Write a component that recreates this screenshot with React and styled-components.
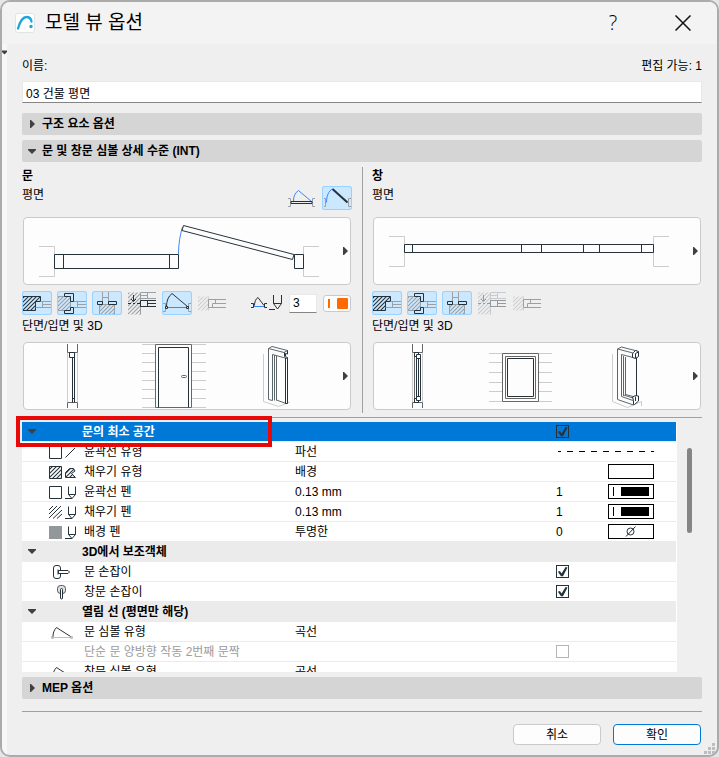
import React, { useState } from "react";
import styled, { createGlobalStyle } from "styled-components";

const INK = "#26323a";
const GRAY = "#9aa0a4";
const WALL = "#cccccc";
const BLUE = "#3a86ff";

const GlobalStyle = createGlobalStyle`
  * {
    box-sizing: border-box;
  }
  body {
    margin: 0;
    background: #e6e6e6;
    color: #000;
    font-family: "Liberation Sans", "Noto Sans CJK KR", sans-serif;
    font-size: 12px;
    line-height: 18px;
  }
  button, input {
    font: inherit;
    color: inherit;
    margin: 0;
    padding: 0;
  }
  svg {
    display: block;
    flex-shrink: 0;
  }
`;

const Dialog = styled.main`
  display: flex;
  flex-direction: column;
  height: 100vh;
  min-height: 640px;
  border: 2px solid #ababab;
  border-radius: 10px;
  background: #efefef;
  overflow: hidden;
`;

const TitleBar = styled.header`
  display: flex;
  align-items: center;
  flex-shrink: 0;
  height: 42px;
  padding: 0 19px 0 13px;
  background: #f3f3f3;
`;

const Title = styled.h1`
  flex: 1;
  margin: 0 0 0 10px;
  font-size: 19px;
  font-weight: 400;
  line-height: 28px;
`;

const TitleButton = styled.button`
  display: flex;
  align-items: center;
  justify-content: center;
  width: 30px;
  height: 30px;
  margin-left: 40px;
  border: 0;
  background: none;
  font-family: "Open Sans", sans-serif;
  font-size: 20px;
  font-weight: 300;
  line-height: 30px;
`;

const Main = styled.div`
  display: flex;
  flex: 1;
  min-height: 0;
`;

const SideStrip = styled.div`
  width: 5px;
  padding-top: 6px;
  background: #f7f7f7;
`;

const Body = styled.div`
  display: flex;
  flex-direction: column;
  flex: 1;
  min-width: 0;
  padding: 13px 15px 10px;
`;

const NameRow = styled.div`
  display: flex;
  justify-content: space-between;
`;

const NameInput = styled.input`
  width: 100%;
  height: 22px;
  margin: 6px 0 10px;
  padding: 0 3px;
  flex-shrink: 0;
  border: 1px solid #e8e8e8;
  border-bottom-color: #858585;
  background: #fff;
`;

const SectionButton = styled.button`
  display: flex;
  align-items: center;
  flex-shrink: 0;
  gap: 6px;
  width: 100%;
  height: 22px;
  margin-bottom: 5px;
  padding: 0 6px;
  border: 0;
  border-radius: 2px;
  background: #d5d5d5;
  font-weight: 700;
  text-align: left;
`;

const Panels = styled.div`
  display: grid;
  grid-template-columns: 1fr 1fr;
  flex-shrink: 0;
`;

const Panel = styled.section`
  padding: ${(p) => (p.$divided ? "0 0 3px 9px" : "0 10px 3px 0")};
  border-left: ${(p) => (p.$divided ? "1px solid #a0a0a0" : "0")};
`;

const PanelTitle = styled.h2`
  margin: 0;
  font-size: 12px;
  line-height: 19px;
`;

const ViewRow = styled.div`
  display: flex;
  gap: 5px;
  height: 24px;
`;

const ViewName = styled.span`
  flex: 1;
`;

const PreviewButton = styled.button`
  display: flex;
  align-items: center;
  width: calc(100% - 2px);
  height: 68px;
  margin: 7px 1px 0;
  border: 1px solid #cacaca;
  border-radius: 4px;
  background: #fdfdfd;
`;

const Drawing = styled.svg`
  flex: 1;
  min-width: 0;
  height: 66px;
`;

const ToolRow = styled.div`
  display: flex;
  align-items: center;
  gap: 5px;
  height: 24px;
  margin: 6px 0 2px;
`;

const ToolButton = styled.button`
  width: 30px;
  height: 24px;
  border: 0;
  border-radius: 3px;
  background: ${(p) => (p.$on ? "#cce8ff" : "transparent")};
  box-shadow: ${(p) => (p.$on ? "inset 0 0 0 1px #99d1ff" : "none")};
`;

const PenGroup = styled.div`
  display: flex;
  align-items: center;
  gap: 6px;
  margin: 0 1px 0 auto;
`;

const PenInput = styled.input`
  width: 28px;
  height: 19px;
  padding: 0 3px;
  border: 1px solid #e8e8e8;
  border-bottom-color: #858585;
  background: #fff;
`;

const ColorButton = styled.button`
  display: flex;
  align-items: center;
  justify-content: space-between;
  width: 28px;
  height: 17px;
  padding: 0 2px 0 4px;
  border: 1px solid #cacaca;
  border-radius: 3px;
  background: #fdfdfd;
`;

const PenStroke = styled.span`
  width: 2px;
  height: 9px;
  background: #ff6a00;
`;

const PenColor = styled.span`
  width: 11px;
  height: 11px;
  border-radius: 1px;
  background: #ff6a00;
`;

const Rule = styled.hr`
  flex-shrink: 0;
  width: 100%;
  height: 1px;
  margin: ${(p) => (p.$wide ? "7px 0 4px" : "4px 0")};
  border: 0;
  background: #a0a0a0;
`;

const OptionArea = styled.div`
  position: relative;
  display: flex;
  flex: 1;
  min-height: 0;
  margin-bottom: 5px;
`;

const OptionList = styled.div`
  flex: 1;
  padding-right: 1px;
  overflow: hidden;
  background: #fff;
`;

const ScrollThumb = styled.div`
  width: 5px;
  height: 34%;
  margin: 26px 10px 0;
  border-radius: 3px;
  background: #858585;
`;

const Marker = styled.div`
  position: absolute;
  top: -6px;
  left: -6px;
  width: 256px;
  height: 31px;
  border: 4px solid #e80808;
  pointer-events: none;
`;

const OptionTable = styled.table`
  width: 100%;
  border-spacing: 0;
  table-layout: fixed;
`;

const Column = styled.col`
  width: ${(p) => p.$width || "auto"};
`;

const Cell = styled.td`
  height: 20px;
  padding: 0 0 0 2px;
  border-bottom: 1px solid #ebebeb;
  line-height: 18px;
  text-align: left;
  vertical-align: middle;
  white-space: nowrap;
`;

const IconCell = styled(Cell)`
  padding-left: 26px;
`;

const ArrowCell = styled(Cell)`
  padding-left: 6px;
`;

const SwatchCell = styled(Cell)`
  padding-left: 0;
`;

const GroupCell = styled(Cell)`
  padding-left: 0;
`;

const OptionRow = styled.tr`
  color: ${(p) => (p.$disabled ? "#9b9b9b" : "inherit")};
`;

const GroupRow = styled.tr`
  background: ${(p) => (p.$selected ? "#0078d7" : "#ebebeb")};
  color: ${(p) => (p.$selected ? "#fff" : "#000")};
  font-weight: 700;
`;

const CheckBox = styled.input.attrs({ type: "checkbox" })`
  appearance: none;
  display: block;
  width: 13px;
  height: 13px;
  border: 1px solid ${INK};
  color: ${INK};

  &:checked::before {
    content: "";
    display: block;
    width: 11px;
    height: 11px;
    background: currentColor;
    clip-path: polygon(8% 52%, 26% 46%, 42% 68%, 78% 8%, 96% 14%, 54% 94%, 36% 94%);
  }
  &:disabled {
    border-color: #b5b5b5;
  }
`;

const Swatch = styled.button`
  display: flex;
  align-items: center;
  justify-content: center;
  gap: 7px;
  width: 46px;
  height: 15px;
  border: 1px solid #000;
  background: #fff;
`;

const SwatchLine = styled.span`
  width: 1px;
  height: 9px;
  background: #000;
`;

const SwatchFill = styled.span`
  width: 28px;
  height: 9px;
  background: #000;
`;

const Footer = styled.footer`
  display: flex;
  justify-content: flex-end;
  flex-shrink: 0;
  gap: 12px;
  padding: 8px 1px 0;
`;

const DialogButton = styled.button`
  width: 88px;
  height: 21px;
  border: 1px solid ${(p) => (p.$primary ? "#0078d7" : "#cacaca")};
  border-radius: 4px;
  background: #fdfdfd;
  line-height: 18px;
`;

const Grip = styled.svg`
  position: fixed;
  right: 4px;
  bottom: 2px;
`;

const Defs = styled.svg`
  position: absolute;
`;

const HatchDefs = () => (
  <Defs width="0" height="0" aria-hidden="true">
    <defs>
      {[["ink", INK], ["gray", GRAY], ["light", "#cfcfcf"]].map(([id, color]) => (
        <pattern
          key={id}
          id={`hatch-${id}`}
          width="4"
          height="4"
          patternUnits="userSpaceOnUse"
        >
          <path d="M-1 1 1 -1M0 4 4 0M3 5 5 3" stroke={color} strokeWidth="1.1" />
        </pattern>
      ))}
    </defs>
  </Defs>
);

const Arrow = ({ down, ...rest }) =>
  down ? (
    <svg width="8" height="5" fill="#404040" {...rest}>
      <path d="M0 0h8v1L4 5 0 1z" />
    </svg>
  ) : (
    <svg width="8" height="8" fill="#404040" {...rest}>
      <path d="M2 0h1l4 4-4 4H2z" />
    </svg>
  );

const Logo = () => (
  <svg width="20" height="20" viewBox="0 0 20 20" fill="none">
    <rect x=".5" y=".5" width="19" height="19" rx="2.5" fill="#fff" stroke="#dfe4e6" />
    <path
      d="M3 15.500C5 8.500 8 4 11.500 4c3 0 4.500 2 5 4.500"
      stroke="#1fa5d8"
      strokeWidth="2.300"
      strokeLinecap="round"
    />
    <circle cx="16" cy="13.500" r="1.700" fill="#1fa5d8" />
  </svg>
);

const Icon = ({ children, width = 30, height = 24 }) => (
  <svg width={width} height={height} viewBox={`0 0 ${width} ${height}`} fill="none" stroke={INK}>
    {children}
  </svg>
);

const toolIcons = {
  reveal: (
    <>
      <path d="M1 5.500H18.500V10.500H13.500V19.500H1" fill="url(#hatch-ink)" />
      <path d="M18.500 10.500H29M13.500 16.500H29M20.500 10.500V16.500M20.500 13.500H29" stroke={GRAY} />
    </>
  ),
  casing: (
    <>
      <path d="M1 5.500H13.500V19.500H1" stroke={GRAY} fill="url(#hatch-gray)" />
      <path d="M13.500 10.500H29M13.500 16.500H29M20.500 10.500V16.500M20.500 13.500H29" stroke={GRAY} />
      <path
        d="M7.500 5.500V2.500H16.500V10.500H13.500V5.500ZM7.500 19.500V22.500H16.500V16.500H13.500V19.500Z"
        fill="#cce8ff"
      />
    </>
  ),
  sill: (
    <>
      <path d="M10.500 1V13.500M16.500 1V13.500M10.500 6.500H16.500" stroke={GRAY} />
      <path d="M7.500 23V13.500H22.500V23" stroke={GRAY} fill="url(#hatch-gray)" />
      <path d="M5.500 10.500H10.500V13.500H5.500ZM16.500 10.500H24.500V13.500H16.500Z" />
    </>
  ),
  wallhole: (
    <>
      <path d="M13.500 1.500V23.500" stroke={GRAY} />
      <path d="M1 1.500H13.500V23.500H1Z" stroke="none" fill="url(#hatch-gray)" />
      <path d="M13.500 1.500H29M13.500 7.500H29M13.500 4.500H20.500M20.500 1.500V7.500" stroke={GRAY} />
      <path d="M13.500 9.500H29M13.500 15.500H29M20.500 12.500H29M20.500 9.500V15.500M13.500 9.500V15.500" />
      <path d="M6.500 4V10M4 8 6.500 10.500 9 8M1 12.500H4M6 12.500H8M10 12.500H13" />
    </>
  ),
  swing: (
    <>
      <path d="M1 12.500H3.500V20.500H1M29 12.500H26.500V20.500H29" stroke={GRAY} />
      <path d="M5 16.500H25" stroke={BLUE} />
      <path d="M4.500 15C4.500 10 6.500 5 10 2.500L25.500 15.500M3.500 15.500H5.500V17.500H3.500ZM24.500 15.500H26.500V17.500H24.500Z" />
    </>
  ),
  jamb: (
    <>
      <path d="M1 5.500H11.500V19.500H1Z" stroke="none" fill="url(#hatch-light)" />
      <path d="M11.500 5.500V19.500" stroke="#cfcfcf" />
      <path d="M29 8.500H11.500V16.500H29M29 12.500H15.500V16.500M18.500 8.500V12.500" stroke={GRAY} />
    </>
  ),
  closed: (
    <>
      <path d="M1 12.500H3.500V20.500H1M28 12.500H25.500V20.500H28" stroke={GRAY} />
      <path d="M6.500 15C6.500 10 8 7 11.500 4.500L24.500 15.500" stroke={BLUE} />
      <path d="M4 15.500H25V17.500H4Z" />
    </>
  ),
  opened: (
    <>
      <path d="M2 12.500H3.500V20.500H2M29 12.500H26.500V20.500H29" stroke={GRAY} />
      <path d="M4.500 16.500C4.500 10 6.500 5 10.500 3" stroke={BLUE} />
      <path d="M10.500 3 25.500 16.500" strokeWidth="2" />
    </>
  ),
};

const PenShape = () => (
  <path d="M20.500 3.500V11.500L24 15.500 27.500 11.500V3.500M20.500 11.500H27.500M17 15.500H24" />
);

const rowIcons = {
  contour: <path d="M1.500 3.500H13.500V15.500H1.500ZM17.500 14.500 27 5" />,
  fill: (
    <>
      <path d="M1.500 3.500H13.500V15.500H1.500Z" fill="url(#hatch-ink)" />
      <path
        d="M17.500 14.500V9.500L21.500 5.500H25.500L27 8 23.500 10.500 27.500 14.500Z"
        fill="url(#hatch-ink)"
      />
    </>
  ),
  contourPen: (
    <>
      <path d="M1.500 3.500H13.500V15.500H1.500Z" />
      <PenShape />
    </>
  ),
  fillPen: (
    <>
      <path d="M1 7 5 3M1 11 9 3M1 15 13 3M5 15.500 14 7M9 15.500 14 11" />
      <PenShape />
    </>
  ),
  backPen: (
    <>
      <rect x="1" y="3" width="13" height="13" fill="#92979a" stroke="none" />
      <PenShape />
    </>
  ),
  doorHandle: (
    <>
      <rect x="5.500" y="2.500" width="7" height="13" rx="2.500" />
      <path d="M10.500 7.500H20L21.500 9 20 10.500H10.500Z" fill="#fff" />
      <path d="M10 6.500V11.500" />
    </>
  ),
  windowHandle: (
    <>
      <rect x="9.500" y="2.500" width="8" height="8" rx="3" fill="#dfe2e4" stroke="#4d565c" />
      <path d="M12.500 6.500a1 1 0 0 1 2 0V15a1 1 0 0 1-2 0Z" fill="#fff" />
    </>
  ),
  symbol: (
    <>
      <path d="M4 14.500H24M3.500 13.500H5.500V15.500H3.500ZM22.500 13.500H24.500V15.500H22.500Z" stroke="#c0c0c0" />
      <path d="M5 13.500C5 10 6 7 8.500 4.500L22.500 13.500" />
    </>
  ),
};

const DoorPlan = () => (
  <>
    <path d="M15 28.500H30.500V58.500H15M295 28.500H279.500V58.500H295" stroke={WALL} />
    <path d="M154.500 36C154.500 26 156 17 158.500 9" stroke={BLUE} />
    <path d="M30.500 36.500H154.500V50.500H30.500ZM39.500 36.500V50.500M145.500 36.500V50.500M270.500 36.500H279.500V50.500H270.500Z" />
    <path d="M159.500 7.500 270 36.500 268.500 41.500 158 12.500Z" />
  </>
);

const WindowPlan = () => (
  <>
    <path d="M15 18.500H30.500V48.500H15M295 18.500H279.500V48.500H295" stroke={WALL} />
    <path d="M30.500 26.500H279.500V34.500H30.500ZM38.500 26.500V34.500M147.500 26.500V34.500M167.500 26.500V34.500M209.500 26.500V34.500M225.500 26.500V34.500M267.500 26.500V34.500" />
  </>
);

const DoorViews = () => (
  <>
    <path d="M43.500 10V59M53.500 10V59" stroke={WALL} />
    <path d="M43.500 1V9.500H53.500V1M43.500 65V59.500H53.500V65" stroke="#666" />
    <path d="M45.500 9.500H50.500V14.500H45.500ZM48.500 14.500V59.500M50.500 12.500V59.500M48.500 55.500H50.500" />
    {[1, 10, 19, 28, 37, 46, 55, 64].map((y) => (
      <path key={y} d={`M118 ${y + 0.5}H131M168 ${y + 0.5}H182`} stroke={WALL} />
    ))}
    <path d="M131.500 1.500H167.500V64.500H131.500Z" stroke="#666" />
    <path d="M134.500 64.500V4.500H164.500V64.500" />
    <rect x="157.500" y="32.500" width="5" height="2" rx="1" stroke="#666" />
    <path d="M239.500 11V58.500L254.500 63.500 266 59" stroke={WALL} />
    <path d="M244.500 56.500V5.500L248 3.500 263.500 7.500M244.500 5.500 260 9.500 263.500 7.500M244.500 56.500 248.500 57.500V11.500L263 15.500M250.500 12V57.500M252.500 13V57.500M252.500 57 262 60.500" stroke="#5d666b" />
    <path d="M260.500 9.500V13.500L263.500 14.500V60.500H261.500V15M263.500 7.500V11L261.500 10.500V13" />
  </>
);

const WindowViews = () => (
  <>
    <path d="M38.500 10V59M48.500 10V59" stroke={WALL} />
    <path d="M38.500 1V9.500H48.500V1M38.500 65V59.500H48.500V65M40.500 12V57" stroke="#666" />
    <path d="M40.500 9.500H44.500V13.500H40.500ZM40.500 55.500H44.500V59.500H40.500ZM42.500 14V54M44.500 14V54M46.500 14V54" />
    <path d="M42.500 11.500H46.500V15.500H42.500ZM42.500 53.500H46.500V57.500H42.500Z" fill="#fdfdfd" />
    {[10, 19, 29, 39, 48, 58].map((y) => (
      <path key={y} d={`M115 ${y + 0.5}H128M165 ${y + 0.5}H178`} stroke={WALL} />
    ))}
    <path d="M128.500 10.500H164.500V58.500H128.500ZM131.500 13.500H161.500V55.500H131.500Z" stroke="#666" />
    <path d="M133.500 15.500H159.500V53.500H133.500Z" />
    <path d="M238.500 11V58.500L253.500 64.500 267.500 58.500V63" stroke={WALL} />
    <path d="M243.500 56.500V6L247.500 4 263 8M243.500 6 259 10M243.500 56.500 259.500 62M247.500 53.500V11.500L259 14.500M249.500 53V13M251.500 52V14M247.500 53.500 259 57.500M249.500 52 259 55M251.500 51.500 261 54" stroke="#5d666b" />
    <path d="M262.500 14V54" />
    <path d="M259.500 9.500 261.500 7.500 264.500 8.500V13.500L261.500 15.500 258.500 14.500V11ZM261.500 15V10.500L264.500 9M259.500 61.500V57.500L258.500 54 261.500 52.500 264.500 53V58L260.500 61.500ZM261.500 58V53.500" fill="#fdfdfd" />
  </>
);

const doorTools = [
  { icon: "reveal", label: "문 리빌", on: true },
  { icon: "casing", label: "문 케이싱", on: true },
  { icon: "sill", label: "문 문턱", on: true },
  { icon: "wallhole", label: "문 벽 개구부", on: false },
  { icon: "swing", label: "문 열림 선", on: true },
  { icon: "jamb", label: "문 문설주", on: false },
];

const windowTools = [
  { icon: "reveal", label: "창 리빌", on: true },
  { icon: "casing", label: "창 케이싱", on: true },
  { icon: "sill", label: "창 창턱", on: true },
  { icon: "wallhole", label: "창 벽 개구부", on: false, faded: true },
  { icon: "jamb", label: "창 문설주", on: false },
];

const options = [
  { id: "space", group: "문의 최소 공간", selected: true, check: true },
  { id: "contour", name: "윤곽선 유형", icon: "contour", value: "파선", dash: true },
  { id: "fill", name: "채우기 유형", icon: "fill", value: "배경", swatch: "empty" },
  { id: "contourPen", name: "윤곽선 펜", icon: "contourPen", value: "0.13 mm", pen: 1, swatch: "pen" },
  { id: "fillPen", name: "채우기 펜", icon: "fillPen", value: "0.13 mm", pen: 1, swatch: "pen" },
  { id: "backPen", name: "배경 펜", icon: "backPen", value: "투명한", pen: 0, swatch: "none" },
  { id: "aux", group: "3D에서 보조객체" },
  { id: "doorHandle", name: "문 손잡이", icon: "doorHandle", check: true },
  { id: "windowHandle", name: "창문 손잡이", icon: "windowHandle", check: true },
  { id: "opening", group: "열림 선 (평면만 해당)" },
  { id: "doorSymbol", name: "문 심볼 유형", icon: "symbol", value: "곡선" },
  { id: "double", name: "단순 문 양방향 작동 2번째 문짝", check: false, disabled: true },
  { id: "windowSymbol", name: "창문 심볼 유형", icon: "symbol", value: "곡선" },
];

const Tool = ({ icon, label, on: initial, faded }) => {
  const [on, setOn] = useState(initial);
  return (
    <ToolButton $on={on} aria-label={label} aria-pressed={on} onClick={() => setOn(!on)}>
      <Icon>
        <g opacity={faded ? 0.45 : 1}>{toolIcons[icon]}</g>
      </Icon>
    </ToolButton>
  );
};

const Preview = ({ label, children }) => (
  <PreviewButton aria-label={label}>
    <Drawing viewBox="0 0 310 66" fill="none" stroke={INK}>
      {children}
    </Drawing>
    <Arrow width="16" viewBox="-7 0 16 8" />
  </PreviewButton>
);

const PenSwatch = ({ kind, label }) => (
  <Swatch aria-label={label}>
    {kind === "pen" && (
      <>
        <SwatchLine />
        <SwatchFill />
      </>
    )}
    {kind === "none" && (
      <Icon width={12} height={11}>
        <circle cx="5.500" cy="5.500" r="3.500" />
        <path d="M1 10.500 10.500 .5" />
      </Icon>
    )}
  </Swatch>
);

const GroupItem = ({ item }) => (
  <GroupRow $selected={item.selected}>
    <ArrowCell>
      <Arrow down />
    </ArrowCell>
    <GroupCell as="th" scope="rowgroup">
      {item.check ? <label htmlFor={item.id}>{item.group}</label> : item.group}
    </GroupCell>
    <Cell />
    <Cell colSpan={2}>{item.check && <CheckBox id={item.id} defaultChecked />}</Cell>
  </GroupRow>
);

const OptionItem = ({ item }) => (
  <OptionRow $disabled={item.disabled}>
    <IconCell>
      {item.icon && (
        <Icon width={30} height={18}>
          {rowIcons[item.icon]}
        </Icon>
      )}
    </IconCell>
    <Cell>
      {item.check === undefined ? item.name : <label htmlFor={item.id}>{item.name}</label>}
    </Cell>
    <Cell>{item.value}</Cell>
    <Cell colSpan={item.swatch ? 1 : 2}>
      {item.pen}
      {item.check !== undefined && (
        <CheckBox id={item.id} defaultChecked={item.check} disabled={item.disabled} />
      )}
      {item.dash && (
        <svg width="98" height="3" stroke="#000">
          <path d="M2 1.500H5M11 1.500H93" strokeDasharray="6 6" />
          <path d="M95 1.500H98" />
        </svg>
      )}
    </Cell>
    {item.swatch && (
      <SwatchCell>
        <PenSwatch kind={item.swatch} label={item.name} />
      </SwatchCell>
    )}
  </OptionRow>
);

const App = () => {
  const [name, setName] = useState("03 건물 평면");
  const [pen, setPen] = useState("3");

  return (
    <Dialog>
      <GlobalStyle />
      <HatchDefs />
      <TitleBar>
        <Logo />
        <Title>모델 뷰 옵션</Title>
        <TitleButton aria-label="도움말">?</TitleButton>
        <TitleButton aria-label="닫기">
          <svg width="16" height="16" stroke="#111" strokeWidth="1.500">
            <path d="M.5 .5 15.500 15.500M15.500 .5 .5 15.500" />
          </svg>
        </TitleButton>
      </TitleBar>
      <Main>
        <SideStrip>
          <Arrow down width="5" viewBox="1 0 6 5" />
        </SideStrip>
        <Body>
          <NameRow>
            <label htmlFor="name">이름:</label>
            <span>편집 가능: 1</span>
          </NameRow>
          <NameInput id="name" value={name} onChange={(e) => setName(e.target.value)} />
          <SectionButton aria-expanded="false">
            <Arrow />
            구조 요소 옵션
          </SectionButton>
          <SectionButton aria-expanded="true">
            <Arrow down />
            문 및 창문 심볼 상세 수준 (INT)
          </SectionButton>
          <Panels>
            <Panel>
              <PanelTitle>문</PanelTitle>
              <ViewRow>
                <ViewName>평면</ViewName>
                <Tool icon="closed" label="닫힌 문" on={false} />
                <Tool icon="opened" label="열린 문" on />
              </ViewRow>
              <Preview label="문 평면">
                <DoorPlan />
              </Preview>
              <ToolRow>
                {doorTools.map((tool) => (
                  <Tool key={tool.icon} {...tool} />
                ))}
                <PenGroup>
                  <Icon width={32} height={18}>
                    <path d="M0 9.500H2.500V13.500H0M16 9.500H13.500V13.500H16" />
                    <path d="M3 12.500H13" stroke={BLUE} />
                    <path d="M3.500 11.500C3.500 8 4.500 5 7 3.500L13 11.500" />
                    <path d="M22.500 1V9.500L26.500 15 30.500 9.500V1M22.500 9.500H30.500M18 15.500H24" />
                  </Icon>
                  <PenInput
                    aria-label="열림 선 펜"
                    value={pen}
                    onChange={(e) => setPen(e.target.value)}
                  />
                  <ColorButton aria-label="펜 색상">
                    <PenStroke />
                    <PenColor />
                  </ColorButton>
                </PenGroup>
              </ToolRow>
              <span>단면/입면 및 3D</span>
              <Preview label="문 단면/입면 및 3D">
                <DoorViews />
              </Preview>
            </Panel>
            <Panel $divided>
              <PanelTitle>창</PanelTitle>
              <ViewRow>
                <ViewName>평면</ViewName>
              </ViewRow>
              <Preview label="창 평면">
                <WindowPlan />
              </Preview>
              <ToolRow>
                {windowTools.map((tool) => (
                  <Tool key={tool.icon} {...tool} />
                ))}
              </ToolRow>
              <span>단면/입면 및 3D</span>
              <Preview label="창 단면/입면 및 3D">
                <WindowViews />
              </Preview>
            </Panel>
          </Panels>
          <Rule />
          <OptionArea>
            <OptionList>
              <OptionTable>
                <colgroup>
                  <Column $width="60px" />
                  <Column $width="211px" />
                  <Column />
                  <Column $width="54px" />
                  <Column $width="68px" />
                </colgroup>
                <tbody>
                  {options.map((item) =>
                    item.group ? (
                      <GroupItem key={item.id} item={item} />
                    ) : (
                      <OptionItem key={item.id} item={item} />
                    )
                  )}
                </tbody>
              </OptionTable>
            </OptionList>
            <ScrollThumb />
            <Marker />
          </OptionArea>
          <SectionButton aria-expanded="false">
            <Arrow />
            MEP 옵션
          </SectionButton>
          <Rule $wide />
          <Footer>
            <DialogButton>취소</DialogButton>
            <DialogButton $primary>확인</DialogButton>
          </Footer>
        </Body>
      </Main>
      <Grip width="12" height="12" fill="#bdbdbd">
        <path d="M9 0h3v3H9zM9 4h3v3H9zM5 4h3v3H5zM9 8h3v3H9zM5 8h3v3H5zM1 8h3v3H1z" />
      </Grip>
    </Dialog>
  );
};

export default App;
